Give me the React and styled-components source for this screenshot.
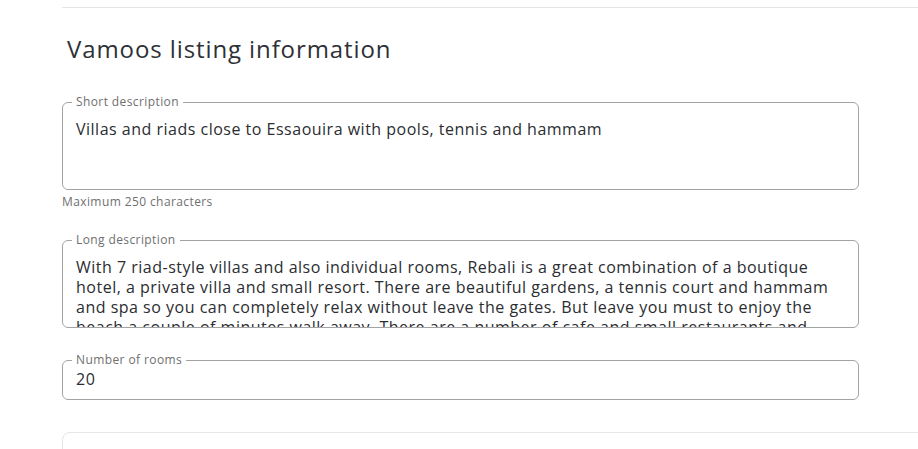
import React from 'react';
import styled, { createGlobalStyle } from 'styled-components';

const GlobalStyle = createGlobalStyle`
  body {
    margin: 0;
    background: #ffffff;
    font-family: 'Open Sans', 'Liberation Sans', sans-serif;
    color: #2b2d31;
  }
`;

const Page = styled.div`
  padding-left: 62px;
  overflow: hidden;
  height: 449px;
`;

const TopRule = styled.div`
  height: 7px;
  border-bottom: 1px solid #e4e4e4;
`;

const Section = styled.section`
  width: 797px;
  display: flex;
  flex-direction: column;
`;

const Heading = styled.h2`
  margin: 26px 0 0 5px;
  font-size: 24px;
  line-height: 30px;
  font-weight: 400;
  letter-spacing: 0.9px;
  color: #2e3136;
`;

const Field = styled.div`
  display: flex;
  flex-direction: column;
  margin-top: ${(p) => p.$gap}px;
`;

const Outline = styled.fieldset`
  margin: 0;
  padding: 0;
  border: 1px solid #a3a3a3;
  border-radius: 6px;
  min-width: 0;
`;

const Legend = styled.legend`
  margin-left: 9px;
  padding: 0 4px;
  font-size: 12px;
  line-height: 16px;
  letter-spacing: 0.4px;
  color: #6f6f6f;
`;

const TextArea = styled.textarea`
  display: block;
  width: 100%;
  box-sizing: border-box;
  height: 79px;
  margin: 0;
  padding: 9px 13px;
  border: none;
  outline: none;
  resize: none;
  overflow: hidden;
  background: transparent;
  font-family: inherit;
  font-size: 16px;
  line-height: 20px;
  letter-spacing: 0.5px;
  color: #2b2d31;
`;

const Input = styled.input`
  display: block;
  width: 100%;
  box-sizing: border-box;
  height: 31px;
  margin: 0;
  padding: 1px 13px 10px;
  border: none;
  outline: none;
  background: transparent;
  font-family: inherit;
  font-size: 16px;
  line-height: 20px;
  letter-spacing: 0.5px;
  color: #2b2d31;
`;

const Helper = styled.p`
  margin: 4px 0 0;
  font-size: 12px;
  line-height: 16px;
  letter-spacing: 0.4px;
  color: #707070;
`;

const NextCard = styled.div`
  margin-top: 32px;
  height: 60px;
  margin-right: -20px;
  border: 1px solid #e6e6e6;
  border-radius: 8px;
`;

const longText =
  'With 7 riad-style villas and also individual rooms, Rebali is a great combination of a boutique hotel, a private villa and small resort. There are beautiful gardens, a tennis court and hammam and spa so you can completely relax without leave the gates. But leave you must to enjoy the beach a couple of minutes walk away. There are a number of cafe and small restaurants and shops in the village.';

const App = () => {
  return (
    <>
      <GlobalStyle />
      <Page>
        <TopRule />
        <Section>
          <Heading>Vamoos listing information</Heading>
          <Field $gap={30}>
            <Outline>
              <Legend>Short description</Legend>
              <TextArea
                defaultValue="Villas and riads close to Essaouira with pools, tennis and hammam"
              />
            </Outline>
            <Helper>Maximum 250 characters</Helper>
          </Field>
          <Field $gap={22}>
            <Outline>
              <Legend>Long description</Legend>
              <TextArea defaultValue={longText} />
            </Outline>
          </Field>
          <Field $gap={24}>
            <Outline>
              <Legend>Number of rooms</Legend>
              <Input defaultValue="20" />
            </Outline>
          </Field>
        </Section>
        <NextCard />
      </Page>
    </>
  );
};

export default App;
